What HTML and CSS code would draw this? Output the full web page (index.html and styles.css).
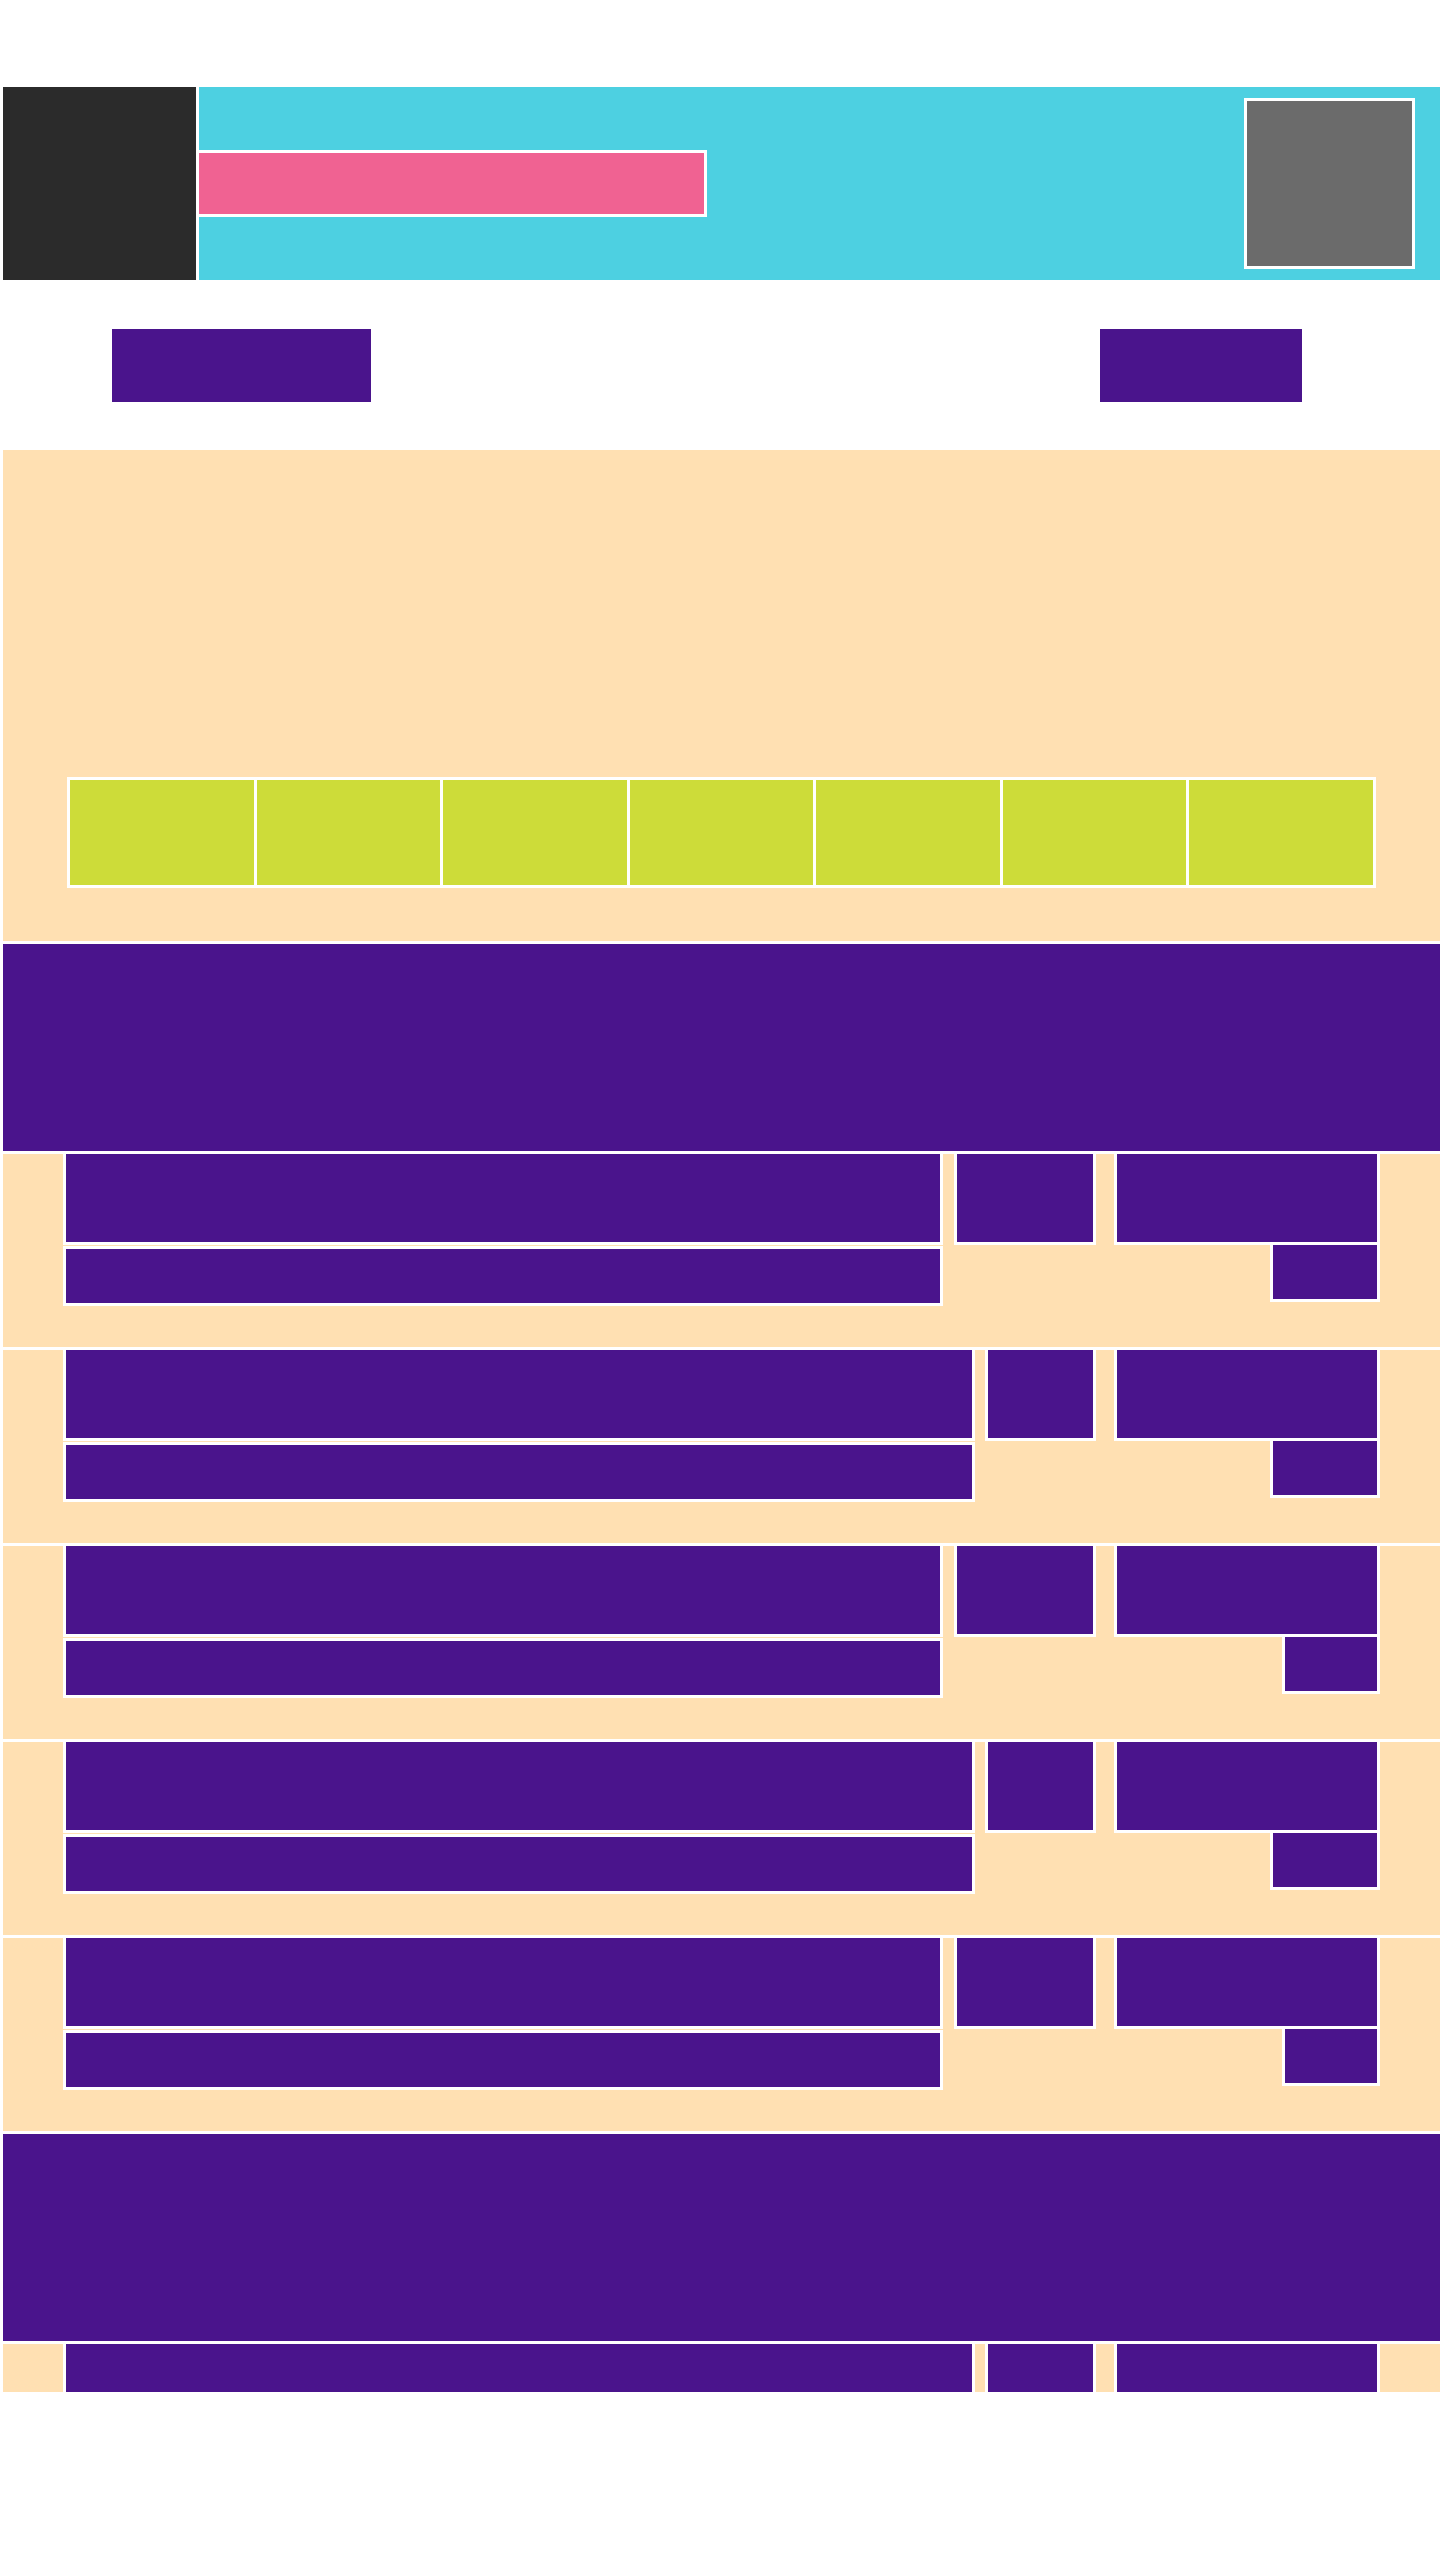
FILE: index.html
```html
<!DOCTYPE html>
<html lang="en">
<head>
  <meta charset="UTF-8">
  <meta name="viewport" content="width=device-width, initial-scale=1.0">
  <title>Listing</title>
  <link rel="stylesheet" href="styles.css">
</head>
<body>

  <div class="page">
    <header class="top">
      <div class="logo"></div>
      <div class="banner">
        <div class="title-bar"></div>
        <div class="avatar"></div>
      </div>
    </header>

    <nav class="nav">
      <a class="btn btn-wide" href="#"></a>
      <a class="btn btn-narrow" href="#"></a>
    </nav>

    <main class="feed">
      <section class="hero">
        <div class="tabs">
          <div class="tab"></div>
          <div class="tab"></div>
          <div class="tab"></div>
          <div class="tab"></div>
          <div class="tab"></div>
          <div class="tab"></div>
          <div class="tab"></div>
        </div>
      </section>

      <div class="band"></div>

      <div class="row odd">
        <div class="main"><div class="box title"></div><div class="box sub"></div></div>
        <div class="box count"></div>
        <div class="side"><div class="box side-top"></div><div class="box side-tag"></div></div>
      </div>

      <div class="row even">
        <div class="main"><div class="box title"></div><div class="box sub"></div></div>
        <div class="box count"></div>
        <div class="side"><div class="box side-top"></div><div class="box side-tag"></div></div>
      </div>

      <div class="row odd">
        <div class="main"><div class="box title"></div><div class="box sub"></div></div>
        <div class="box count"></div>
        <div class="side"><div class="box side-top"></div><div class="box side-tag short"></div></div>
      </div>

      <div class="row even">
        <div class="main"><div class="box title"></div><div class="box sub"></div></div>
        <div class="box count"></div>
        <div class="side"><div class="box side-top"></div><div class="box side-tag"></div></div>
      </div>

      <div class="row odd">
        <div class="main"><div class="box title"></div><div class="box sub"></div></div>
        <div class="box count"></div>
        <div class="side"><div class="box side-top"></div><div class="box side-tag short"></div></div>
      </div>

      <div class="band"></div>

      <div class="row even last">
        <div class="main"><div class="box title"></div><div class="box sub"></div></div>
        <div class="box count"></div>
        <div class="side"><div class="box side-top"></div><div class="box side-tag"></div></div>
      </div>
    </main>
  </div>

</body>
</html>
```

FILE: styles.css
```css
body {
  margin: 0;
  background-color: #fff;
  font-family: 'Liberation Sans', Arial, sans-serif;
}

.page {
  padding: 87px 0 0 3px;
}

/* header */
.top {
  display: flex;
  gap: 3px;
  height: 193px;
}

.logo {
  width: 193px;
  background-color: #2b2b2b;
}

.banner {
  flex: 1;
  display: flex;
  align-items: center;
  justify-content: space-between;
  padding-right: 25px;
  background-color: #4dd0e1;
}

.title-bar {
  width: 511px;
  height: 67px;
  margin-left: -3px;
  box-sizing: border-box;
  border: 3px solid #fff;
  background-color: #f06292;
}

.avatar {
  width: 171px;
  height: 171px;
  box-sizing: border-box;
  border: 3px solid #fff;
  background-color: #6b6b6b;
}

/* nav */
.nav {
  display: flex;
  justify-content: space-between;
  padding: 49px 138px 48px 109px;
}

.btn {
  display: block;
  height: 73px;
  background-color: #4a148c;
}

.btn-wide {
  width: 259px;
}

.btn-narrow {
  width: 202px;
}

/* feed */
.feed {
  display: flex;
  flex-direction: column;
  gap: 3px;
}

.hero {
  height: 491px;
  box-sizing: border-box;
  padding: 327px 0 0 64px;
  background-color: #ffe0b2;
}

.tabs {
  width: 1309px;
  height: 111px;
  box-sizing: border-box;
  display: grid;
  grid-template-columns: repeat(7, 1fr);
  gap: 3px;
  padding: 3px;
  background-color: #fff;
}

.tab {
  background-color: #cddc39;
}

.band {
  height: 207px;
  background-color: #4a148c;
}

.row {
  display: flex;
  align-items: flex-start;
  height: 193px;
  padding: 0 60px;
  background-color: #ffe0b2;
}

.row.last {
  height: 48px;
  overflow: hidden;
}

.box {
  box-sizing: border-box;
  border: 3px solid #fff;
  background-color: #4a148c;
}

.main {
  flex: 1;
  display: flex;
  flex-direction: column;
  gap: 1px;
  margin-top: -3px;
}

.title {
  height: 94px;
}

.sub {
  height: 60px;
}

.count {
  height: 94px;
  margin: -3px 18px 0 11px;
}

.odd .count {
  width: 142px;
}

.even .count {
  width: 111px;
  margin-left: 10px;
}

.side {
  width: 266px;
  display: flex;
  flex-direction: column;
  align-items: flex-end;
  margin-top: -3px;
}

.side-top {
  align-self: stretch;
  height: 94px;
}

.side-tag {
  width: 110px;
  height: 60px;
  margin-top: -3px;
}

.side-tag.short {
  width: 98px;
}
```
